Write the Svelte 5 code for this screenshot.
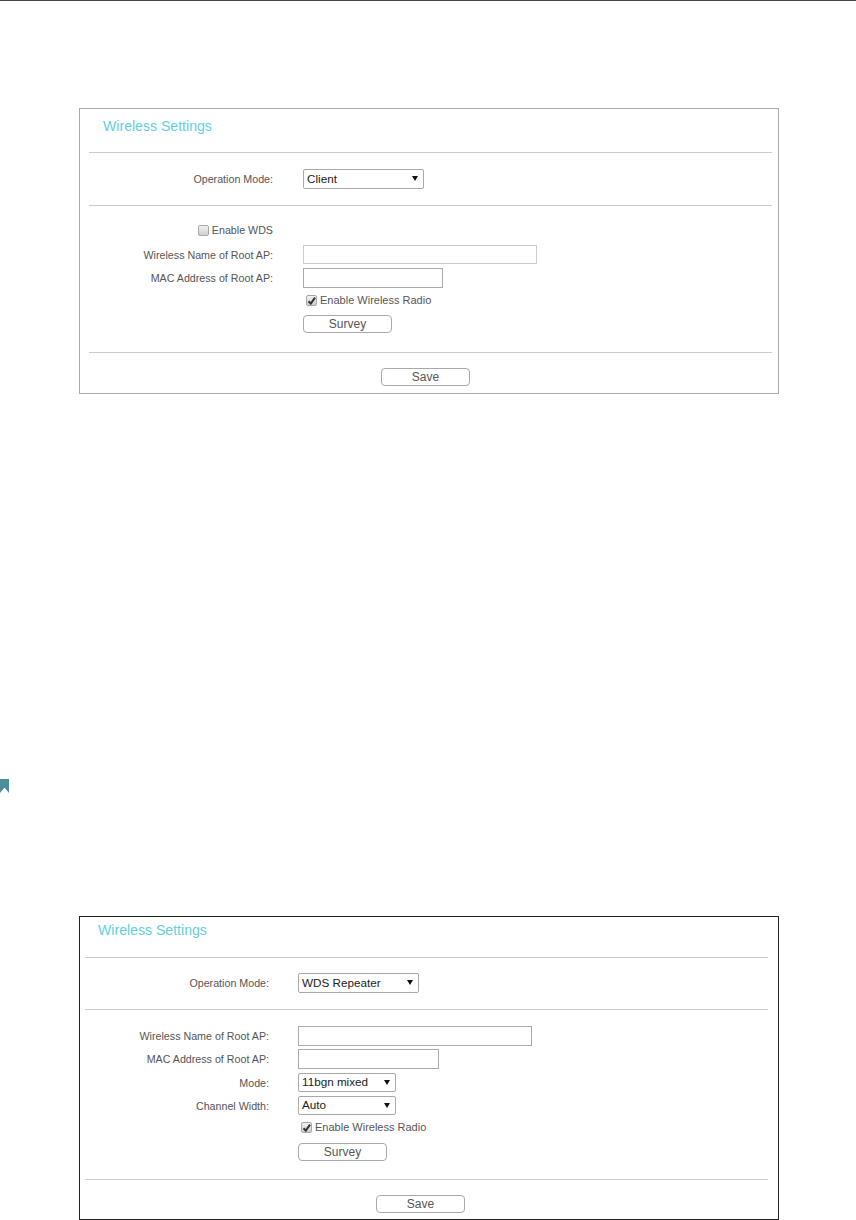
<script>
  const check = "M1.5 5.2 L3.8 7.6 L8 1.6";
</script>

{#snippet checkbox(checked)}
  <span class="box">
    {#if checked}
      <svg width="9" height="9" viewBox="0 0 9 9"><path d={check} fill="none" stroke="#333" stroke-width="2" /></svg>
    {/if}
  </span>
{/snippet}

{#snippet dropdown(value, cls)}
  <div class="select {cls}">
    <select><option>{value}</option></select>
  </div>
{/snippet}

<div class="page">
  <div class="page-rule"></div>

  <section class="panel first">
    <h2>Wireless Settings</h2>
    <div class="rule"></div>
    <div class="row mode-row">
      <span class="label">Operation Mode:</span>
      {@render dropdown('Client', 'wide')}
    </div>
    <div class="rule"></div>
    <div class="fields wds">
      <div class="row wds-row">
        <span class="label with-box">{@render checkbox(false)}Enable WDS</span>
      </div>
      <div class="row name-row">
        <span class="label">Wireless Name of Root AP:</span>
        <input class="name" type="text" />
      </div>
      <div class="row mac-row">
        <span class="label">MAC Address of Root AP:</span>
        <input class="mac" type="text" />
      </div>
      <div class="row radio-row">
        <span></span>
        <span class="radio">{@render checkbox(true)}Enable Wireless Radio</span>
      </div>
      <div class="row survey-row">
        <span></span>
        <button>Survey</button>
      </div>
    </div>
    <div class="rule"></div>
    <div class="footer"><button>Save</button></div>
  </section>

  <div class="bookmark">
    <svg width="9" height="14" viewBox="0 0 9 14"><path d="M0 0H9V14L4.5 8.5L0 14Z" fill="#4d8d9b" /></svg>
  </div>

  <section class="panel second">
    <h2>Wireless Settings</h2>
    <div class="rule"></div>
    <div class="row mode-row">
      <span class="label">Operation Mode:</span>
      {@render dropdown('WDS Repeater', 'wide')}
    </div>
    <div class="rule"></div>
    <div class="fields">
      <div class="row name-row">
        <span class="label">Wireless Name of Root AP:</span>
        <input class="name" type="text" />
      </div>
      <div class="row mac-row">
        <span class="label">MAC Address of Root AP:</span>
        <input class="mac" type="text" />
      </div>
      <div class="row small-row">
        <span class="label">Mode:</span>
        {@render dropdown('11bgn mixed', 'narrow')}
      </div>
      <div class="row small-row">
        <span class="label">Channel Width:</span>
        {@render dropdown('Auto', 'narrow')}
      </div>
      <div class="row radio-row">
        <span></span>
        <span class="radio">{@render checkbox(true)}Enable Wireless Radio</span>
      </div>
      <div class="row survey-row">
        <span></span>
        <button>Survey</button>
      </div>
    </div>
    <div class="rule"></div>
    <div class="footer"><button>Save</button></div>
  </section>
</div>

<style>
  :global(body) {
    margin: 0;
    background: #fff;
  }

  .page {
    width: 856px;
    height: 1220px;
    overflow: hidden;
    font-family: "Liberation Sans", Arial, sans-serif;
    font-size: 10.7px;
    color: #555;
  }

  .page-rule {
    height: 1px;
    background: #444;
  }

  .panel {
    box-sizing: border-box;
    width: 700px;
    margin-left: 79px;
    background: #fff;
  }

  .first {
    margin-top: 107px;
    height: 286px;
    border: 1px solid #aaa;
    --inset: 9px;
    --label: 193px;
    --gap: 30px;
    --right: 6px;
  }

  .second {
    margin-top: 123px;
    height: 304px;
    border: 1px solid #222;
    --inset: 5px;
    --label: 189px;
    --gap: 29px;
    --right: 10px;
  }

  .bookmark {
    margin-top: 385px;
    height: 14px;
    line-height: 0;
  }

  h2 {
    margin: 0;
    height: 43px;
    box-sizing: border-box;
    padding: 9px 0 0 23px;
    font-size: 14.1px;
    line-height: 17px;
    font-weight: 400;
    color: #62d0e0;
  }

  .second h2 {
    padding: 5px 0 0 18px;
    height: 40px;
  }

  .rule {
    height: 1px;
    margin: 0 var(--right) 0 var(--inset);
    background: #ccc;
  }

  .row {
    display: grid;
    grid-template-columns: var(--label) auto;
    column-gap: var(--gap);
    justify-content: start;
    align-items: center;
  }

  .label {
    text-align: right;
    white-space: nowrap;
  }

  .with-box {
    display: flex;
    justify-content: flex-end;
    align-items: center;
  }

  .mode-row {
    padding: 16px 0;
  }

  .second .mode-row {
    padding: 15px 0 16px;
  }

  .fields {
    padding: 16px 0 19px;
  }

  .wds-row {
    height: 16px;
    margin-bottom: 7px;
  }

  .name-row {
    margin-bottom: 4px;
  }

  .first .name {
    height: 19px;
    border-color: #ccc;
  }

  .second .name-row {
    margin-bottom: 3px;
  }

  .mac-row,
  .small-row {
    margin-bottom: 4px;
  }

  .radio-row {
    height: 16px;
    margin-bottom: 7px;
  }

  .first .radio-row {
    margin-top: 4px;
  }

  .second .radio-row {
    margin-top: 3px;
    margin-bottom: 8px;
  }

  .second .fields {
    padding-bottom: 18px;
  }

  .radio {
    display: flex;
    align-items: center;
    padding-left: 3px;
    font-size: 11px;
    white-space: nowrap;
  }

  .box {
    box-sizing: border-box;
    display: flex;
    align-items: center;
    justify-content: center;
    width: 11px;
    height: 11px;
    margin-right: 3px;
    border: 1px solid #a8a8a8;
    border-radius: 2px;
    background: linear-gradient(#f2f2f2, #cfcfcf);
  }

  .select {
    position: relative;
    box-sizing: border-box;
    height: 20px;
  }

  .select::after {
    content: "";
    position: absolute;
    top: 7px;
    right: 6px;
    border-left: 3px solid transparent;
    border-right: 3px solid transparent;
    border-top: 5px solid #111;
    pointer-events: none;
  }

  .wide {
    width: 121px;
  }

  .narrow {
    width: 98px;
    height: 19px;
  }

  select {
    appearance: none;
    box-sizing: border-box;
    display: block;
    width: 100%;
    height: 100%;
    padding: 0 0 2px 3px;
    border: 1px solid #a9a9a9;
    border-radius: 2px;
    background: #fff;
    font: 11.7px "Liberation Sans", Arial, sans-serif;
    color: #222;
  }

  input {
    box-sizing: border-box;
    display: block;
    height: 20px;
    padding: 0;
    border: 1px solid #aaa;
    background: #fff;
  }

  .name {
    width: 234px;
  }

  .mac {
    width: 140px;
  }

  .second .mac {
    width: 141px;
  }

  button {
    box-sizing: border-box;
    display: block;
    width: 89px;
    height: 18px;
    padding: 0;
    border: 1px solid #a9a9a9;
    border-radius: 4px;
    background: #fff;
    font: 12px "Liberation Sans", Arial, sans-serif;
    color: #555;
  }

  .footer {
    padding: 15px 0 0 301px;
  }

  .second .footer {
    padding-left: 296px;
  }
</style>
